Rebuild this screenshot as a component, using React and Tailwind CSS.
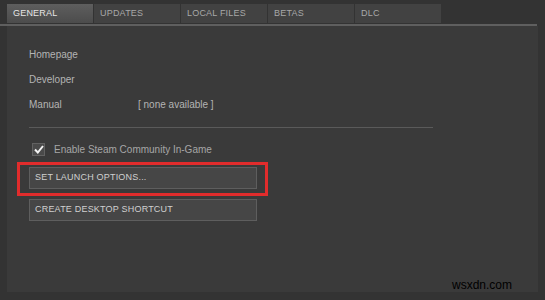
import React from 'react'

const tabs = ['GENERAL', 'UPDATES', 'LOCAL FILES', 'BETAS', 'DLC']

function Tab({ label, active }) {
  return (
    <div
      className={
        'w-[86px] h-[19px] flex items-center pl-[6px] text-[9px] tracking-[0.2px] ' +
        (active
          ? 'bg-gradient-to-b from-[#5e5e5e] to-[#4c4c4c] text-[#e6e6e6]'
          : 'bg-[#424242] text-[#a8a8a8]')
      }
    >
      {label}
    </div>
  )
}

function Button({ children }) {
  return (
    <div className="w-[228px] h-[22px] flex items-center pl-[5px] bg-[#464646] border border-[#5e5e5e] text-[#d0d0d0] text-[9px] tracking-[0.2px]">
      {children}
    </div>
  )
}

export default function App() {
  return (
    <div
      className="w-[545px] h-[300px] bg-[#333333] relative overflow-hidden"
      style={{ fontFamily: '"Liberation Sans", Arial, sans-serif' }}
    >
      <div className="flex gap-[1px] pl-[7px] pt-[4px]">
        {tabs.map((t, i) => (
          <Tab key={t} label={t} active={i === 0} />
        ))}
      </div>
      <div className="h-[2px] w-[537px] bg-[#5f5f5f] mt-[1px]" />

      <div className="ml-[7px] w-[531px] h-[266px] bg-[#3a3a3a] pl-[22px]">
        <div className="flex flex-col gap-[14px] pt-[23px] text-[10px] text-[#b4b4b4]">
          <div className="h-[11px] leading-[11px]">Homepage</div>
          <div className="h-[11px] leading-[11px]">Developer</div>
          <div className="h-[11px] leading-[11px] flex">
            <span className="w-[109px]">Manual</span>
            <span>[ none available ]</span>
          </div>
        </div>

        <div className="h-[1px] w-[404px] bg-[#5a5a5a] mt-[17px]" />

        <div className="flex items-center mt-[14px] ml-[3px] gap-[9px]">
          <div className="w-[13px] h-[13px] bg-[#4a4a4a] border border-[#626262] flex items-center justify-center">
            <svg width="10" height="9" viewBox="0 0 10 9">
              <path d="M1 4.5 L3.8 7.5 L9 1" fill="none" stroke="#f2f2f2" strokeWidth="2" />
            </svg>
          </div>
          <span className="text-[10px] text-[#a6a6a6]">Enable Steam Community In-Game</span>
        </div>

        <div className="mt-[5px] ml-[-12px] w-[251px] h-[34px] border-[3px] border-[#e12c2c] pl-[9px] pt-[2px]">
          <Button>SET LAUNCH OPTIONS...</Button>
        </div>

        <div className="mt-[3px]">
          <Button>CREATE DESKTOP SHORTCUT</Button>
        </div>
      </div>

      <div className="absolute right-[33px] bottom-[6px] text-[12px] text-black">wsxdn.com</div>
    </div>
  )
}
